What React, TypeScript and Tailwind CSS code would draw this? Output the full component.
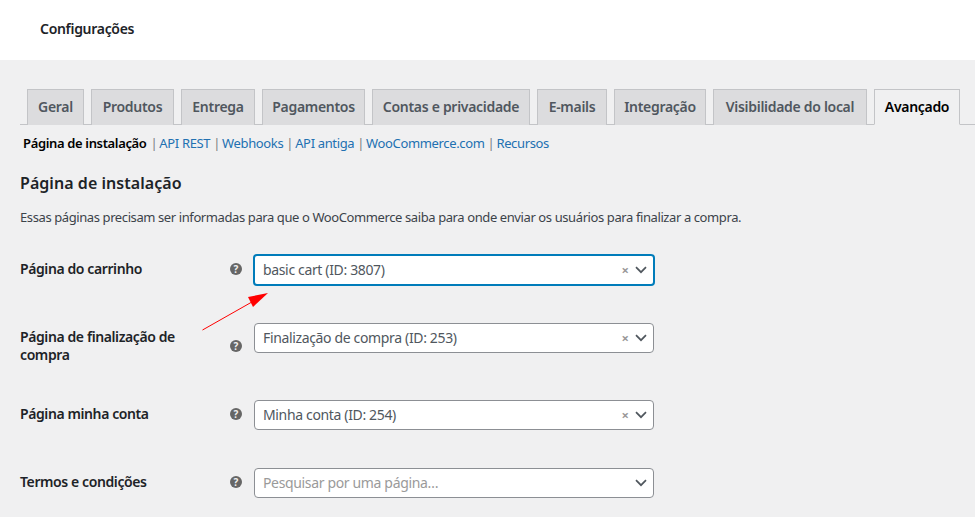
const font = { fontFamily: '"Noto Sans", sans-serif' };

const tabs = [
  { label: 'Geral', width: 'w-[57px]' },
  { label: 'Produtos', width: 'w-[83px]' },
  { label: 'Entrega', width: 'w-[74px]' },
  { label: 'Pagamentos', width: 'w-[103px]' },
  { label: 'Contas e privacidade', width: 'w-[158px]' },
  { label: 'E-mails', width: 'w-[70px]' },
  { label: 'Integração', width: 'w-[92px]' },
  { label: 'Visibilidade do local', width: 'w-[154px]' },
];

const links = ['API REST', 'Webhooks', 'API antiga', 'WooCommerce.com', 'Recursos'];

function HelpIcon({ className }: { className: string }) {
  return (
    <span
      className={`flex h-3 w-3 shrink-0 items-center justify-center rounded-full bg-[#666] text-[10px] leading-none font-bold text-[#f0f0f0] ${className}`}
    >
      ?
    </span>
  );
}

function Chevron() {
  return (
    <svg width="12" height="8" viewBox="0 0 12 8" fill="none" className="ml-[6px]">
      <path d="M1 1.2 6 6.2 11 1.2" stroke="#50575e" strokeWidth="1.7" />
    </svg>
  );
}

function Select({ value, placeholder, focused }: { value: string; placeholder?: boolean; focused?: boolean }) {
  return (
    <div
      className={`flex items-center rounded-[4px] bg-white pr-[6px] ${
        focused
          ? '-mt-[1px] -ml-[1px] h-[32px] w-[402px] border-2 border-[#007cba] pl-[8px]'
          : 'h-[30px] w-[400px] border border-[#8c8f94] pl-[8px]'
      }`}
    >
      <span className={`flex-1 pb-[1px] text-[14px] tracking-[-0.35px] ${placeholder ? 'text-[#9a9a9a]' : 'text-[#50575e]'}`}>
        {value}
      </span>
      {!placeholder && <span className="text-[13px] leading-none font-bold text-[#999]">×</span>}
      <Chevron />
    </div>
  );
}

export default function App() {
  return (
    <div className="relative h-[517px] w-[975px] overflow-hidden bg-[#f0f0f1]" style={font}>
      {/* Top bar */}
      <div className="flex h-[60px] items-center bg-white pb-[4px] pl-[40px]">
        <h1 className="text-[14px] font-semibold tracking-[-0.3px] text-[#1d2327]">Configurações</h1>
      </div>

      <div className="pt-[29px] pl-[20px]">
        {/* Tabs */}
        <div className="flex h-[36px] gap-[7px] border-b border-[#c3c4c7] pl-[7px]">
          {tabs.map((tab) => (
            <div
              key={tab.label}
              className={`flex h-[36px] items-center justify-center border border-b-0 border-[#c3c4c7] bg-[#dcdcde] pb-[2px] text-[14px] font-semibold tracking-[-0.3px] whitespace-nowrap text-[#50575e] ${tab.width}`}
            >
              {tab.label}
            </div>
          ))}
          <div className="flex h-[36px] w-[86px] items-center justify-center border border-[#c3c4c7] border-b-[#f0f0f1] bg-[#f0f0f1] pb-[2px] text-[14px] font-semibold tracking-[-0.3px] text-black">
            Avançado
          </div>
        </div>

        {/* Sub nav */}
        <div className="mt-[10px] flex h-[18px] items-center pl-[3px] text-[13px] tracking-[-0.35px] whitespace-nowrap">
          <span className="font-semibold text-black">Página de instalação</span>
          <span className="ml-[4px] text-[#787c82]">|</span>
          {links.map((link, i) => (
            <span key={link} className="flex items-center">
              <span className="ml-[2px] text-[#2271b1]">{link}</span>
              {i < links.length - 1 && <span className="ml-[3px] text-[#787c82]">|</span>}
            </span>
          ))}
        </div>

        <h2 className="mt-[18px] text-[16px] leading-[24px] font-semibold tracking-[0.05px] text-[#1d2327]">
          Página de instalação
        </h2>
        <p className="mt-[13px] text-[13px] leading-[18px] tracking-[-0.4px] text-[#3c434a]">
          Essas páginas precisam ser informadas para que o WooCommerce saiba para onde enviar os usuários para finalizar a compra.
        </p>

        {/* Form rows */}
        <div className="mt-[29px]">
          <div className="flex h-[68px] items-start">
            <div className="w-[210px] pt-[5px] text-[14px] leading-[18px] font-semibold tracking-[-0.4px] text-[#1d2327]">
              Página do carrinho
            </div>
            <HelpIcon className="mt-[8px]" />
            <div className="ml-[12px]">
              <Select value="basic cart (ID: 3807)" focused />
            </div>
          </div>
          <div className="flex h-[77px] items-start">
            <div className="w-[210px] pt-[5px] pr-[30px] text-[14px] leading-[18px] font-semibold tracking-[-0.4px] text-[#1d2327]">
              Página de finalização de compra
            </div>
            <HelpIcon className="mt-[17px]" />
            <div className="ml-[12px]">
              <Select value="Finalização de compra (ID: 253)" />
            </div>
          </div>
          <div className="flex h-[68px] items-start">
            <div className="w-[210px] pt-[5px] text-[14px] leading-[18px] font-semibold tracking-[-0.4px] text-[#1d2327]">
              Página minha conta
            </div>
            <HelpIcon className="mt-[8px]" />
            <div className="ml-[12px]">
              <Select value="Minha conta (ID: 254)" />
            </div>
          </div>
          <div className="flex h-[40px] items-start">
            <div className="w-[210px] pt-[5px] text-[14px] leading-[18px] font-semibold tracking-[-0.4px] text-[#1d2327]">
              Termos e condições
            </div>
            <HelpIcon className="mt-[8px]" />
            <div className="ml-[12px]">
              <Select value="Pesquisar por uma página…" placeholder />
            </div>
          </div>
        </div>
      </div>

      {/* Red annotation arrow */}
      <svg className="absolute top-[285px] left-[195px]" width="85" height="55" viewBox="195 285 85 55" fill="none">
        <path d="M202.5 330 251 302.5" stroke="#f00" strokeWidth="1" />
        <path d="M268 293 248 297 253 307Z" fill="#f00" />
      </svg>
    </div>
  );
}
